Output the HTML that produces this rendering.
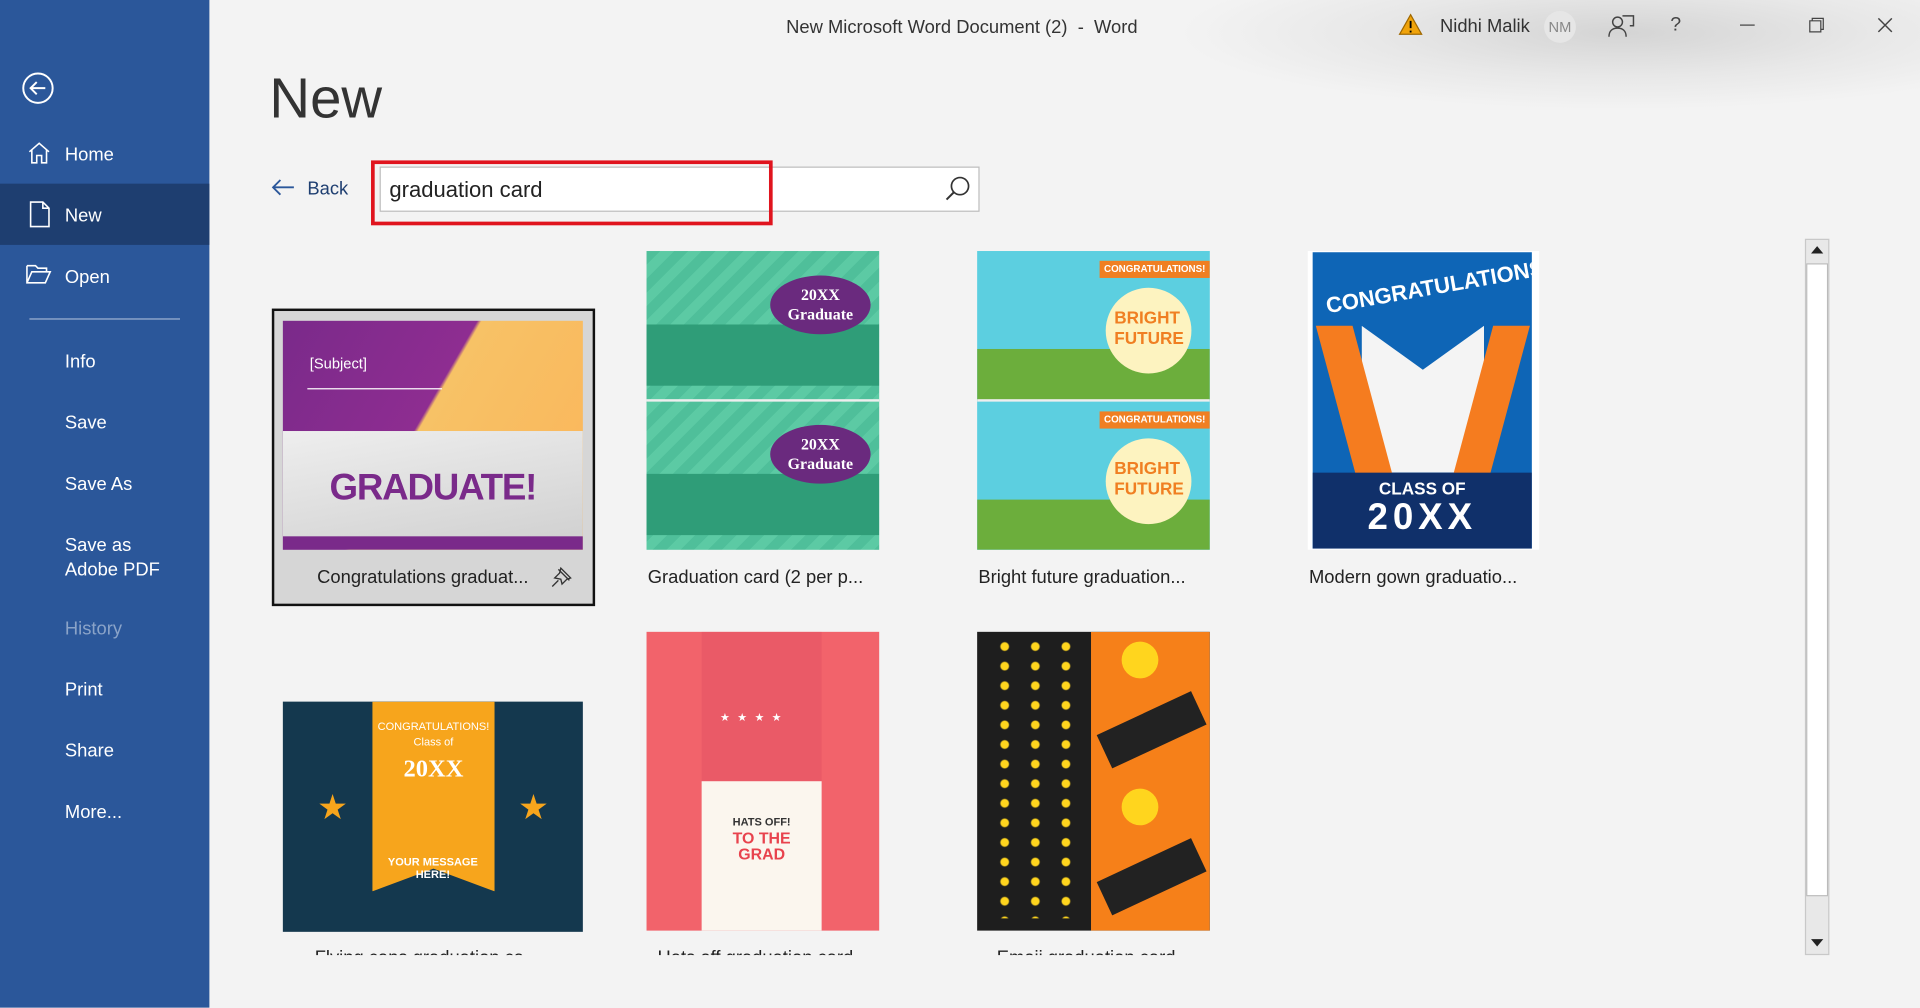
<!DOCTYPE html>
<html><head><meta charset="utf-8"><style>
*{margin:0;padding:0;box-sizing:border-box}
html,body{width:1920px;height:1008px;overflow:hidden;background:#f3f3f3}
#w{position:absolute;left:0;top:0;width:1568px;height:823px;transform:scale(1.22449);transform-origin:0 0;font-family:"Segoe UI","Liberation Sans",sans-serif;color:#222;background:#f3f3f3;overflow:hidden}
.a{position:absolute}
#side{left:0;top:0;width:171px;height:823px;background:#2b579a;color:#fff}
.mi{position:absolute;left:53px;font-size:15px;color:#fff}
.lbl{position:absolute;font-size:15px;color:#222;white-space:nowrap}
.th{position:absolute;overflow:hidden}
</style></head><body><div id="w">
<div id="side" class="a">
 <svg class="a" style="left:17px;top:58px" width="28" height="28"><circle cx="14" cy="14" r="12" fill="none" stroke="#fff" stroke-width="1.6"/><path d="M20 14H8M13 9l-5 5 5 5" fill="none" stroke="#fff" stroke-width="1.6"/></svg>
 <svg class="a" style="left:22px;top:115px" width="20" height="20"><path d="M2 9L10 2l8 7M4 7v11h4v-6h4v6h4V7" fill="none" stroke="#fff" stroke-width="1.3"/></svg>
 <div class="mi" style="top:118px">Home</div>
 <div class="a" style="left:0;top:150px;width:171px;height:50px;background:#1e3e70"></div>
 <svg class="a" style="left:24px;top:164px" width="18" height="22"><path d="M1 1h10l5 5v15H1zM11 1v5h5" fill="none" stroke="#fff" stroke-width="1.3"/></svg>
 <div class="mi" style="top:168px">New</div>
 <svg class="a" style="left:21px;top:215px" width="22" height="18"><path d="M1 2h7l2 2h7v3M1 2v14h15l4-9H5L1 16" fill="none" stroke="#fff" stroke-width="1.3"/></svg>
 <div class="mi" style="top:218px">Open</div>
 <div class="a" style="left:24px;top:260px;width:123px;height:1px;background:#9fb3d3"></div>
 <div class="mi" style="top:287px">Info</div>
 <div class="mi" style="top:337px">Save</div>
 <div class="mi" style="top:387px">Save As</div>
 <div class="mi" style="top:436px;line-height:20px">Save as<br>Adobe PDF</div>
 <div class="mi" style="top:505px;color:#8aa3c8">History</div>
 <div class="mi" style="top:555px">Print</div>
 <div class="mi" style="top:605px">Share</div>
 <div class="mi" style="top:655px">More...</div>
</div>
<div class="a" style="left:960px;top:0;width:608px;height:90px;background:radial-gradient(ellipse at 60% 30%,#d4d4d4,#e8e8e8 40%,#f3f3f3 70%)"></div>
<div class="a" style="left:642px;top:14px;font-size:15px;color:#333">New Microsoft Word Document (2)&nbsp; -&nbsp; Word</div>
<svg class="a" style="left:1142px;top:11px" width="20" height="18"><path d="M10 1L19 17H1z" fill="#f0a30a" stroke="#a06800"/><path d="M10 6v6M10 14v1.5" stroke="#000" stroke-width="1.5"/></svg>
<div class="a" style="left:1176px;top:13px;font-size:15px;color:#333">Nidhi Malik</div>
<div class="a" style="left:1261px;top:9px;width:26px;height:26px;border-radius:50%;background:#e6e6e6;color:#888;font-size:12px;text-align:center;line-height:26px">NM</div>
<svg class="a" style="left:1313px;top:11px" width="22" height="20"><circle cx="8" cy="7" r="4" fill="none" stroke="#444" stroke-width="1.2"/><path d="M1 19c0-5 3-7 7-7s7 2 7 7M12 2h9v8h-3" fill="none" stroke="#444" stroke-width="1.2"/></svg>
<div class="a" style="left:1364px;top:12px;font-size:16px;color:#444">?</div>
<div class="a" style="left:1421px;top:20px;width:12px;height:1px;background:#444"></div>
<svg class="a" style="left:1477px;top:14px" width="13" height="13"><path d="M1 3h9v9H1zM3 3V1h9v9h-2" fill="none" stroke="#444"/></svg>
<svg class="a" style="left:1533px;top:14px" width="13" height="13"><path d="M1 1l11 11M12 1L1 12" stroke="#444" stroke-width="1.2"/></svg>
<div class="a" style="left:220px;top:53px;font-size:46px;font-weight:300;color:#333">New</div>
<svg class="a" style="left:221px;top:146px" width="20" height="14"><path d="M19 7H2M8 1L2 7l6 6" fill="none" stroke="#2b579a" stroke-width="1.5"/></svg>
<div class="a" style="left:251px;top:146px;font-size:15px;color:#1e3e70">Back</div>
<div class="a" style="left:310px;top:136px;width:490px;height:37px;background:#fff;border:1px solid #bdbdbd"></div>
<div class="a" style="left:303px;top:131px;width:328px;height:53px;border:3px solid #e0141e"></div>
<div class="a" style="left:318px;top:145px;font-size:18px;color:#222">graduation card</div>
<svg class="a" style="left:772px;top:143px" width="22" height="22"><circle cx="12" cy="9" r="7" fill="none" stroke="#333" stroke-width="1.4"/><path d="M7 14L1 20" stroke="#333" stroke-width="1.6"/></svg>
<div class="a" style="left:1474px;top:195px;width:20px;height:585px;background:#e8e8e8;border:1px solid #c8c8c8"></div>
<div class="a" style="left:1475px;top:215px;width:18px;height:517px;background:#fff;border:1px solid #bbb"></div>
<div class="a" style="left:1479px;top:201px;border-left:5px solid transparent;border-right:5px solid transparent;border-bottom:6px solid #222"></div>
<div class="a" style="left:1479px;top:767px;border-left:5px solid transparent;border-right:5px solid transparent;border-top:6px solid #222"></div>
<div class="a" style="left:222px;top:252px;width:264px;height:243px;background:#d6d6d6;border:2px solid #111"></div>
<div class="th" style="left:231px;top:262px;width:245px;height:187px;background:linear-gradient(120deg,#7a2a8a 0,#8e2d91 45%,#f7c266 46%,#fbb55a 100%)">
 <div class="a" style="left:0;top:90px;width:245px;height:97px;background:linear-gradient(170deg,#eee,#cfcfcf)"></div>
 <div class="a" style="left:0;top:120px;width:245px;height:40px;font:900 30px 'Liberation Sans';color:#7a2a8a;text-align:center;letter-spacing:-1px">GRADUATE!</div>
 <div class="a" style="left:22px;top:28px;font-size:12px;color:#fff">[Subject]</div>
 <div class="a" style="left:20px;top:55px;width:110px;height:1px;background:#fff"></div>
 <div class="a" style="left:0;top:176px;width:245px;height:11px;background:#7a2a8a"></div>
</div>
<div class="lbl" style="left:259px;top:463px">Congratulations graduat...</div>
<svg class="a" style="left:450px;top:462px" width="18" height="18"><path d="M6 3l9 9M8 2l8 8-3 1-4 4-1-4-5-1 4-4zM6 12l-5 5" fill="none" stroke="#333" stroke-width="1.1"/></svg>
<div class="th" style="left:528px;top:205px;width:190px;height:244px;background:repeating-linear-gradient(135deg,#4fbf9a 0 8px,#5ccaa4 8px 16px)">
 <div class="a" style="left:0;top:60px;width:190px;height:50px;background:#2f9d78"></div>
 <div class="a" style="left:0;top:182px;width:190px;height:50px;background:#2f9d78"></div>
 <div class="a" style="left:101px;top:20px;width:82px;height:48px;border-radius:50%;background:#6a2a7e;color:#fff;font:bold 13px 'Liberation Serif';text-align:center;padding-top:8px">20XX<br>Graduate</div>
 <div class="a" style="left:101px;top:142px;width:82px;height:48px;border-radius:50%;background:#6a2a7e;color:#fff;font:bold 13px 'Liberation Serif';text-align:center;padding-top:8px">20XX<br>Graduate</div>
 <div class="a" style="left:0;top:121px;width:190px;height:2px;background:#eee"></div>
</div>
<div class="lbl" style="left:529px;top:463px">Graduation card (2 per p...</div>
<div class="th" style="left:798px;top:205px;width:190px;height:244px;background:#5ccfe0">
 <div class="a" style="left:0;top:80px;width:190px;height:42px;background:#6cae3c"></div>
 <div class="a" style="left:0;top:203px;width:190px;height:41px;background:#6cae3c"></div>
 <div class="a" style="left:100px;top:8px;width:90px;height:14px;background:#f07f22;color:#fff;font:bold 8px 'Liberation Sans';text-align:center;line-height:14px">CONGRATULATIONS!</div>
 <div class="a" style="left:100px;top:131px;width:90px;height:14px;background:#f07f22;color:#fff;font:bold 8px 'Liberation Sans';text-align:center;line-height:14px">CONGRATULATIONS!</div>
 <div class="a" style="left:105px;top:30px;width:70px;height:70px;border-radius:50%;background:#fdf3c0"></div>
 <div class="a" style="left:105px;top:153px;width:70px;height:70px;border-radius:50%;background:#fdf3c0"></div>
 <div class="a" style="left:112px;top:46px;font:bold 14px 'Liberation Sans';color:#f07f22;line-height:17px">BRIGHT<br>FUTURE</div>
 <div class="a" style="left:112px;top:169px;font:bold 14px 'Liberation Sans';color:#f07f22;line-height:17px">BRIGHT<br>FUTURE</div>
 <div class="a" style="left:0;top:121px;width:190px;height:2px;background:#eee"></div>
</div>
<div class="lbl" style="left:799px;top:463px">Bright future graduation...</div>
<div class="th" style="left:1068px;top:205px;width:189px;height:244px;background:#fff;padding:1px 4px">
 <div style="width:179px;height:242px;background:#0e65b6;position:relative;overflow:hidden">
  <div class="a" style="left:40px;top:60px;width:100px;height:120px;background:#f4f4f4;clip-path:polygon(0 0,50% 30%,100% 0,100% 100%,0 100%)"></div>
  <div class="a" style="left:20px;top:60px;width:30px;height:130px;background:#f57c1f;transform:skewX(15deg)"></div>
  <div class="a" style="left:130px;top:60px;width:30px;height:130px;background:#f57c1f;transform:skewX(-15deg)"></div>
  <div class="a" style="left:0;top:180px;width:179px;height:62px;background:#10306a"></div>
  <div class="a" style="left:0;top:185px;width:179px;text-align:center;color:#fff;font:bold 14px 'Liberation Sans'">CLASS OF</div>
  <div class="a" style="left:0;top:200px;width:179px;text-align:center;color:#fff;font:bold 30px 'Liberation Sans';letter-spacing:4px">20XX</div>
  <div class="a" style="left:10px;top:20px;width:160px;text-align:center;color:#fff;font:bold 18px 'Liberation Sans';transform:rotate(-10deg)">CONGRATULATIONS!</div>
 </div>
</div>
<div class="lbl" style="left:1069px;top:463px">Modern gown graduatio...</div>
<div class="th" style="left:231px;top:573px;width:245px;height:188px;background:#14384e">
 <div class="a" style="left:73px;top:0;width:100px;height:155px;background:#f7a51c;clip-path:polygon(0 0,100% 0,100% 100%,50% 88%,0 100%)"></div>
 <div class="a" style="left:73px;top:14px;width:100px;text-align:center;color:#fff;font:9px 'Liberation Sans';line-height:13px">CONGRATULATIONS!<br>Class of</div>
 <div class="a" style="left:73px;top:44px;width:100px;text-align:center;color:#fff;font:bold 20px 'Liberation Serif'">20XX</div>
 <div class="a" style="left:60px;top:126px;width:125px;text-align:center;color:#fff;font:bold 9px 'Liberation Sans'">YOUR MESSAGE<br>HERE!</div>
 <div class="a" style="left:28px;top:70px;color:#f7a51c;font-size:28px">★</div>
 <div class="a" style="left:192px;top:70px;color:#f7a51c;font-size:28px">★</div>
</div>
<div class="lbl" style="left:257px;top:774px">Flying caps graduation ca...</div>
<div class="th" style="left:528px;top:516px;width:190px;height:244px;background:#f2636b">
 <div class="a" style="left:45px;top:0;width:98px;height:244px;background:#ea5a67"></div>
 <div class="a" style="left:60px;top:65px;color:#fff;font-size:9px;letter-spacing:6px">★★★★</div>
 <div class="a" style="left:45px;top:122px;width:98px;height:122px;background:#fbf6ee"></div>
 <div class="a" style="left:45px;top:150px;width:98px;text-align:center;font:bold 9px 'Liberation Sans';color:#333">HATS OFF!</div>
 <div class="a" style="left:45px;top:162px;width:98px;text-align:center;font:bold 13px 'Liberation Sans';color:#e8434d;line-height:13px">TO THE<br>GRAD</div>
</div>
<div class="lbl" style="left:537px;top:774px">Hats off graduation card</div>
<div class="th" style="left:798px;top:516px;width:190px;height:244px;background:#1e1e1e">
 <div class="a" style="left:93px;top:0;width:97px;height:244px;background:#f68019"></div>
 <div class="a" style="left:118px;top:8px;width:30px;height:30px;border-radius:50%;background:#ffd51e"></div>
 <div class="a" style="left:118px;top:128px;width:30px;height:30px;border-radius:50%;background:#ffd51e"></div>
 <div class="a" style="left:100px;top:65px;width:85px;height:30px;background:#222;transform:rotate(-25deg)"></div>
 <div class="a" style="left:100px;top:185px;width:85px;height:30px;background:#222;transform:rotate(-25deg)"></div>
 <div class="a" style="left:10px;top:4px;width:70px;height:230px;background:radial-gradient(circle,#ffd51e 3px,transparent 4px) 0 0/25px 16px"></div>
</div>
<div class="lbl" style="left:814px;top:774px">Emoji graduation card</div>
<div class="a" style="left:172px;top:780px;width:1300px;height:43px;background:#f3f3f3"></div>
</div></body></html>
